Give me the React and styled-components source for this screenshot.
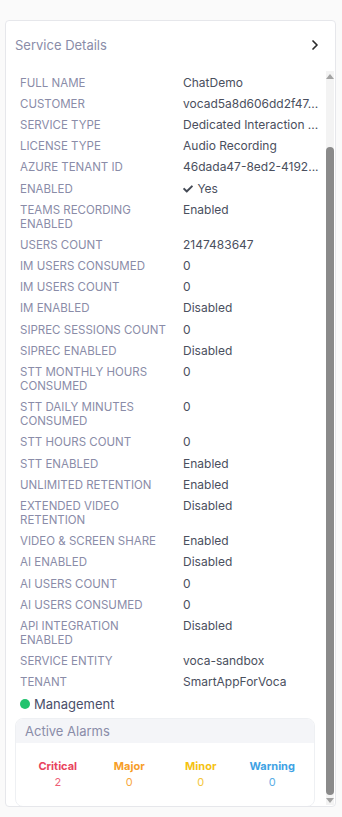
import styled, { createGlobalStyle } from "styled-components";
import { ChevronRight } from "lucide-react";
import { FaCheck } from "react-icons/fa";

const GlobalStyle = createGlobalStyle`
  body {
    margin: 0;
    background: #fafafa;
    font-family: Inter, "Noto Sans", sans-serif;
  }
`;

const details = [
  ["FULL NAME", "ChatDemo"],
  ["CUSTOMER", "vocad5a8d606dd2f47..."],
  ["SERVICE TYPE", "Dedicated Interaction ..."],
  ["LICENSE TYPE", "Audio Recording"],
  ["AZURE TENANT ID", "46dada47-8ed2-4192..."],
  ["ENABLED", "check"],
  ["TEAMS RECORDING ENABLED", "Enabled"],
  ["USERS COUNT", "2147483647"],
  ["IM USERS CONSUMED", "0"],
  ["IM USERS COUNT", "0"],
  ["IM ENABLED", "Disabled"],
  ["SIPREC SESSIONS COUNT", "0"],
  ["SIPREC ENABLED", "Disabled"],
  ["STT MONTHLY HOURS CONSUMED", "0"],
  ["STT DAILY MINUTES CONSUMED", "0"],
  ["STT HOURS COUNT", "0"],
  ["STT ENABLED", "Enabled"],
  ["UNLIMITED RETENTION", "Enabled"],
  ["EXTENDED VIDEO RETENTION", "Disabled"],
  ["VIDEO & SCREEN SHARE", "Enabled"],
  ["AI ENABLED", "Disabled"],
  ["AI USERS COUNT", "0"],
  ["AI USERS CONSUMED", "0"],
  ["API INTEGRATION ENABLED", "Disabled"],
  ["SERVICE ENTITY", "voca-sandbox"],
  ["TENANT", "SmartAppForVoca"],
];

const alarms = [
  { name: "Critical", count: 2, color: "#e8435d", soft: "#ee5f76" },
  { name: "Major", count: 0, color: "#f79d26", soft: "#f8a83f" },
  { name: "Minor", count: 0, color: "#f5c211", soft: "#f4c63a" },
  { name: "Warning", count: 0, color: "#3ea2e4", soft: "#5aaee6" },
];

export default function App() {
  return (
    <Page>
      <GlobalStyle />
      <Card>
        <Header>
          <Title>Service Details</Title>
          <ChevronRight size={16} strokeWidth={2.6} color="#2b2b2b" />
        </Header>
        <Body>
          <Content>
            {details.map(([label, value]) => (
              <Row key={label}>
                <Label>{label}</Label>
                <Value>
                  {value === "check" ? (
                    <>
                      <FaCheck size={10} color="#444a55" /> Yes
                    </>
                  ) : (
                    value
                  )}
                </Value>
              </Row>
            ))}
            <Status>
              <Dot />
              Management
            </Status>
            <AlarmBox>
              <AlarmHeader>Active Alarms</AlarmHeader>
              <AlarmGrid>
                {alarms.map((a) => (
                  <Alarm key={a.name}>
                    <AlarmName color={a.color}>{a.name}</AlarmName>
                    <AlarmCount color={a.soft}>{a.count}</AlarmCount>
                  </Alarm>
                ))}
              </AlarmGrid>
            </AlarmBox>
          </Content>
          <ScrollTrack>
            <ArrowUp />
            <Thumb />
            <ArrowDown />
          </ScrollTrack>
        </Body>
      </Card>
    </Page>
  );
}

const Page = styled.div`
  padding: 20px 6px 10px 5px;
`;

const Card = styled.div`
  box-sizing: border-box;
  height: 787px;
  background: #fff;
  border: 1px solid #e6e7eb;
  border-radius: 4px;
  display: flex;
  flex-direction: column;
  overflow: hidden;
`;

const Header = styled.div`
  display: flex;
  align-items: center;
  justify-content: space-between;
  padding: 15px 12px 12px 9px;
`;

const Title = styled.div`
  font-size: 13px;
  line-height: 18px;
  color: #8a8ca8;
`;

const Body = styled.div`
  flex: 1;
  display: flex;
  min-height: 0;
  gap: 8px;
  padding: 6px 1px 1px 9px;
`;

const Content = styled.div`
  flex: 1;
  min-width: 0;
`;

const Row = styled.div`
  display: grid;
  grid-template-columns: 163px minmax(0, 1fr);
  padding: 3.6px 0 3.6px 5px;
  font-size: 12px;
  line-height: 14px;
`;

const Label = styled.div`
  color: #8a8ca8;
  font-size: 11.5px;
  padding-right: 12px;
`;

const Value = styled.div`
  color: #4a4f5e;
  white-space: nowrap;
  svg {
    vertical-align: -1px;
    margin-right: 1px;
  }
`;

const Status = styled.div`
  display: flex;
  align-items: center;
  gap: 4px;
  padding: 2px 0 0 5px;
  font-size: 13px;
  line-height: 18px;
  color: #4a4f6a;
`;

const Dot = styled.span`
  width: 10px;
  height: 10px;
  border-radius: 50%;
  background: #22c36e;
`;

const AlarmBox = styled.div`
  margin: 5px 3px 0 0;
  border: 1px solid #eef0f3;
  border-radius: 8px;
  overflow: hidden;
`;

const AlarmHeader = styled.div`
  background: #f4f5f8;
  padding: 4px 9px;
  font-size: 13px;
  line-height: 16px;
  color: #8a8ca8;
`;

const AlarmGrid = styled.div`
  display: grid;
  grid-template-columns: repeat(4, 1fr);
  padding: 15px 6px 16px;
`;

const Alarm = styled.div`
  display: flex;
  flex-direction: column;
  align-items: center;
  font-size: 11px;
  line-height: 16px;
`;

const AlarmName = styled.div`
  font-weight: 700;
  color: ${(p) => p.color};
`;

const AlarmCount = styled.div`
  color: ${(p) => p.color};
`;

const ScrollTrack = styled.div`
  width: 8px;
  margin-top: -1px;
  background: #f3f3f3;
  display: flex;
  flex-direction: column;
  align-items: center;
`;

const ArrowUp = styled.div`
  margin-top: 3px;
  width: 0;
  height: 0;
  border-left: 4px solid transparent;
  border-right: 4px solid transparent;
  border-bottom: 5px solid #a3a3a3;
`;

const ArrowDown = styled.div`
  margin: 3px 0 2px;
  width: 0;
  height: 0;
  border-left: 4px solid transparent;
  border-right: 4px solid transparent;
  border-top: 5px solid #a3a3a3;
`;

const Thumb = styled.div`
  flex: 1;
  width: 8px;
  margin-top: 68px;
  border-radius: 4px;
  background: #8a8a8a;
`;
